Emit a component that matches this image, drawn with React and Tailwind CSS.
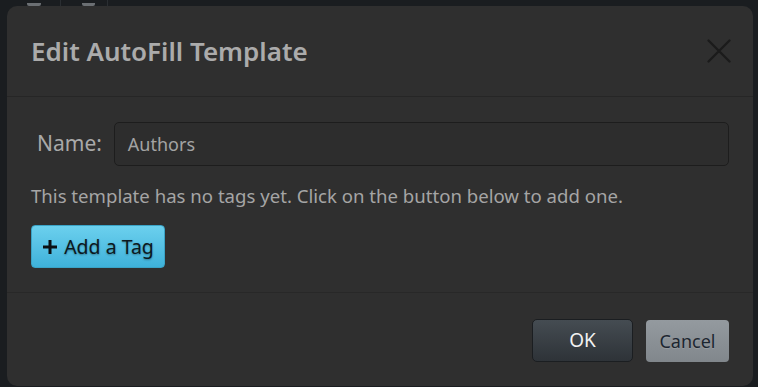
const font = { fontFamily: '"Noto Sans", "Open Sans", sans-serif' };

export default function App() {
  return (
    <div className="w-[758px] h-[387px] overflow-hidden bg-[#1a1d20] flex flex-col" style={font}>
      {/* app behind the dialog */}
      <div className="h-[6px] shrink-0 flex items-end">
        <div className="ml-[27px] w-[14px] h-[3px] rounded-b-[2px] bg-[#6b6f73]" />
        <div className="ml-[19px] w-px h-[6px] bg-[#2a2e32]" />
        <div className="ml-[21px] w-[13px] h-[3px] rounded-b-[2px] bg-[#6b6f73]" />
        <div className="ml-[12px] w-px h-[6px] bg-[#2a2e32]" />
      </div>

      <div className="ml-[7px] w-[746px] h-[380px] shrink-0 rounded-[10px] bg-[#2f2f2f] flex flex-col">
        <div className="h-[91px] shrink-0 flex items-center justify-between pl-[24px] pr-[22px] border-b border-[#262626]">
          <h2 className="text-[26px] font-semibold text-[#ababab] leading-none">Edit AutoFill Template</h2>
          <svg width="24" height="24" viewBox="0 0 24 24" className="text-[#1b1b1b]">
            <path d="M1.5 1.5 22.5 22.5M22.5 1.5 1.5 22.5" stroke="currentColor" strokeWidth="2.3" strokeLinecap="round" />
          </svg>
        </div>

        <div className="h-[196px] shrink-0 px-[24px] pt-[25px] border-b border-[#282828]">
          <div className="flex items-center gap-[12px]">
            <label className="pl-[6px] text-[21px] text-[#a9a9a9]">Name:</label>
            <div className="flex-1 h-[44px] rounded-[5px] border border-[#1d1d1d] bg-[#2d2d2d] flex items-center px-[13px] text-[18px] text-[#a3a3a3]">
              Authors
            </div>
          </div>
          <p className="mt-[17px] text-[18.6px] leading-[26px] text-[#a5a5a5]">
            This template has no tags yet. Click on the button below to add one.
          </p>
          <button className="mt-[16px] h-[43px] w-[134px] rounded-[4px] bg-gradient-to-b from-[#6bd0ee] to-[#3eb2da] border border-[#3aa3c6] flex items-center justify-center gap-[6px] text-[19.5px] text-[#0b1820] [text-shadow:0_1px_2px_rgba(0,0,0,0.35)]">
            <svg width="16" height="16" viewBox="0 0 16 16" className="text-[#0b0f12]">
              <path d="M8 1v14M1 8h14" stroke="currentColor" strokeWidth="3" />
            </svg>
            Add a Tag
          </button>
        </div>

        <div className="flex-1 flex justify-end items-start gap-[13px] pt-[26px] pr-[24px]">
          <button className="h-[43px] w-[101px] rounded-[5px] border border-[#1b1e21] bg-gradient-to-b from-[#454c52] to-[#2e3338] text-[19px] text-[#f2f2f2]">
            OK
          </button>
          <button className="h-[42px] w-[83px] mt-px rounded-[4px] bg-gradient-to-b from-[#949a9f] to-[#81878c] text-[18px] text-[#1c2630] [text-shadow:0_1px_1px_rgba(255,255,255,0.15)]">
            Cancel
          </button>
        </div>
      </div>
    </div>
  );
}
